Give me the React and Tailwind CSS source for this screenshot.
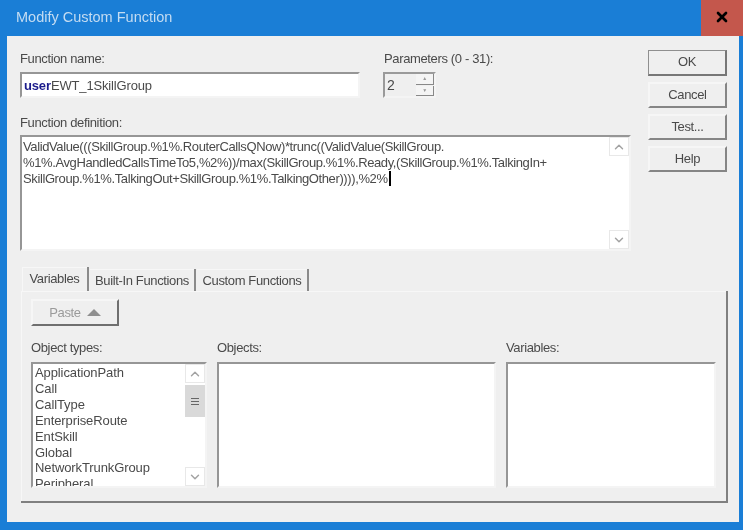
import { ChevronUp, ChevronDown, X } from 'lucide-react';

const sunken = 'border-2 border-t-[#969696] border-l-[#969696] border-r-[#f4f4f4] border-b-[#f4f4f4] bg-white';

function DialogButton({ children, className = 'border-[#f6f6f6] border-r-[#858585] border-b-[#858585]' }) {
  return (
    <button className={`flex h-[26px] w-[79px] items-center justify-center border-2 pb-[2px] text-[13px] text-[#4a4a4a] ${className}`}>
      {children}
    </button>
  );
}

function ScrollArrow({ children }) {
  return (
    <div className="flex h-[19px] shrink-0 items-center justify-center border border-[#e8e8e8] bg-white text-[#a3a3a3]">
      {children}
    </div>
  );
}

function Scrollbar({ thumb }) {
  return (
    <div className="flex w-5 shrink-0 flex-col bg-white">
      <ScrollArrow><ChevronUp size={14} strokeWidth={2.5} /></ScrollArrow>
      {thumb && (
        <div className="mt-[2px] flex h-8 flex-col items-center justify-center gap-[2px] bg-[#d9d9d9]">
          <span className="h-px w-2 bg-[#666]" />
          <span className="h-px w-2 bg-[#666]" />
          <span className="h-px w-2 bg-[#666]" />
        </div>
      )}
      <div className="flex-1" />
      <ScrollArrow><ChevronDown size={14} strokeWidth={2.5} /></ScrollArrow>
    </div>
  );
}

const objectTypes = ['ApplicationPath', 'Call', 'CallType', 'EnterpriseRoute', 'EntSkill', 'Global', 'NetworkTrunkGroup', 'Peripheral'];

export default function App() {
  return (
    <div className="flex h-[530px] w-[743px] flex-col overflow-hidden bg-[#1a7ed6] font-['Liberation_Sans',sans-serif] text-[13px] leading-none tracking-[-0.36px] text-[#4a4a4a] blur-[0.6px]">
      <div className="flex h-9 shrink-0 items-start justify-between">
        <span className="pl-4 pt-[10px] text-[14.5px] tracking-normal text-[#c4dcf2]">Modify Custom Function</span>
        <div className="flex h-9 w-[42px] items-center justify-center bg-[#c4574c] pb-[2px] text-black">
          <X size={16} strokeWidth={4} />
        </div>
      </div>

      <div className="ml-[7px] mr-1 flex h-[486px] flex-col bg-[#efefef] pl-[13px] pr-3">
        <div className="flex">
          <div className="w-[612px] shrink-0">
            <div className="flex">
              <div className="w-[364px] shrink-0">
                <div className="h-9 pt-4">Function name:</div>
                <div className={`flex h-[26px] w-[340px] items-center pl-[2px] tracking-[-0.15px] ${sunken}`}>
                  <span className="font-bold text-[#1c1c8c]">user</span>EWT_1SkillGroup
                </div>
              </div>
              <div>
                <div className="h-9 pt-4">Parameters (0 - 31):</div>
                <div className="-ml-px flex h-[26px] w-[53px] items-stretch border-2 border-t-[#9a9a9a] border-l-[#9a9a9a] border-r-[#f4f4f4] border-b-[#f4f4f4] bg-[#efefef]">
                  <span className="flex-1 pl-[2px] pt-1 text-[14px]">2</span>
                  <div className="flex w-[18px] flex-col gap-px">
                    <div className="flex flex-1 items-center justify-center border-r border-b border-r-[#888] border-b-[#888] bg-[#f4f4f4] text-[5px] text-[#999]">▲</div>
                    <div className="flex flex-1 items-center justify-center border-r border-b border-r-[#888] border-b-[#888] bg-[#f4f4f4] text-[5px] text-[#999]">▼</div>
                  </div>
                </div>
              </div>
            </div>
            <div className="h-[37px] pt-[18px]">Function definition:</div>
            <div className={`flex h-[116px] w-[611px] ${sunken}`}>
              <div className="flex-1 pl-[1px] pt-[2px] leading-4 tracking-[-0.39px] whitespace-pre">
                {'ValidValue(((SkillGroup.%1%.RouterCallsQNow)*trunc((ValidValue(SkillGroup.\n%1%.AvgHandledCallsTimeTo5,%2%))/max(SkillGroup.%1%.Ready,(SkillGroup.%1%.TalkingIn+\nSkillGroup.%1%.TalkingOut+SkillGroup.%1%.TalkingOther)))),%2%'}
                <span className="ml-px border-l-2 border-black" />
              </div>
              <Scrollbar />
            </div>
          </div>
          <div className="ml-4 flex flex-col gap-[6px] pt-[14px]">
            <DialogButton className="border-[#8f8f8f] border-t border-l border-r-[#777] border-b-[#777]">OK</DialogButton>
            <DialogButton>Cancel</DialogButton>
            <DialogButton>Test...</DialogButton>
            <DialogButton>Help</DialogButton>
          </div>
        </div>

        <div className="mt-[16px] flex h-6 items-end pl-[2px]">
          <div className="flex h-6 w-[67px] items-center justify-center border-r-2 border-r-[#8a8a8a] pb-[2px] shadow-[inset_1px_1px_0_#f7f7f7]">Variables</div>
          <div className="ml-px flex h-[22px] w-[106px] items-center justify-center border-r-2 border-r-[#8a8a8a] shadow-[inset_0_1px_0_#f7f7f7]">Built-In Functions</div>
          <div className="ml-px flex h-[22px] w-[112px] items-center justify-center border-r-2 border-r-[#8a8a8a] shadow-[inset_0_1px_0_#f7f7f7]">Custom Functions</div>
        </div>

        <div className="ml-px flex h-[212px] w-[707px] flex-col border-r-2 border-b-2 border-r-[#808080] border-b-[#808080] pl-[10px] pt-2 shadow-[inset_1px_1px_0_#f7f7f7]">
          <button className="flex h-[27px] w-[88px] items-center justify-center gap-[6px] border-2 border-[#f6f6f6] border-r-[#6f6f6f] border-b-[#6f6f6f] text-[#9a9a9a]">
            Paste
            <span className="h-0 w-0 border-x-[7px] border-b-[7px] border-x-transparent border-b-[#8f8f8f]" />
          </button>
          <div className="mt-[15px] flex gap-[10px]">
            <div className="w-[176px]">
              <div className="h-[21px]">Object types:</div>
              <div className={`flex h-[126px] overflow-hidden ${sunken}`}>
                <div className="flex-1 overflow-hidden pl-[2px] pt-[1px] leading-[15.9px] tracking-[-0.1px]">
                  {objectTypes.map((t) => <div key={t}>{t}</div>)}
                </div>
                <Scrollbar thumb />
              </div>
            </div>
            <div className="w-[279px]">
              <div className="h-[21px]">Objects:</div>
              <div className={`h-[126px] ${sunken}`} />
            </div>
            <div className="w-[210px]">
              <div className="h-[21px]">Variables:</div>
              <div className={`h-[126px] ${sunken}`} />
            </div>
          </div>
        </div>
      </div>
    </div>
  );
}
